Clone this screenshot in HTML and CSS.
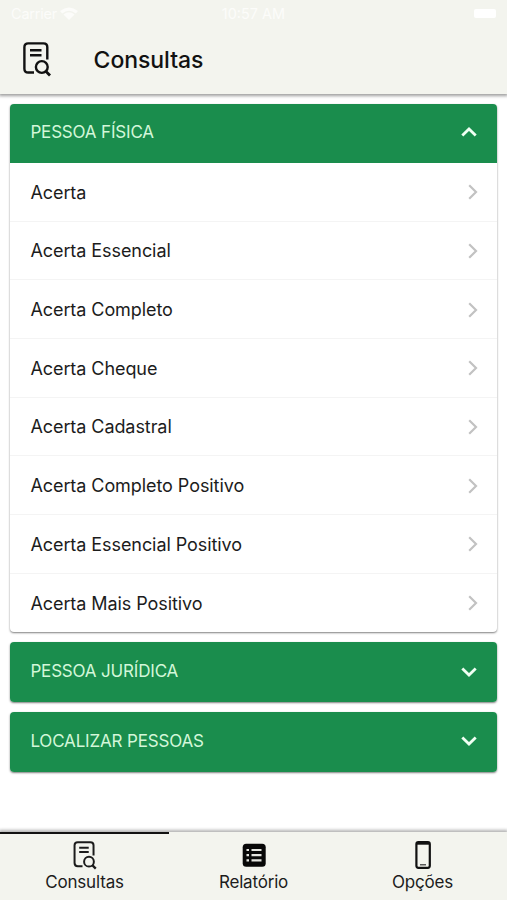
FILE: index.html
```html
<!DOCTYPE html>
<html lang="pt-BR">
<head>
<meta charset="utf-8">
<title>Consultas</title>
<link rel="stylesheet" href="styles.css">
</head>
<body>
<svg class="defs" width="0" height="0">
  <symbol id="search-doc" viewBox="0 0 28 35">
    <path d="M11 30.5H5.2Q1.4 30.5 1.4 26.7V5.2Q1.4 1.4 5.2 1.4H20.5Q24.3 1.4 24.3 5.2V17.5M7 8.2H18.5M7 13.3H18.5" fill="none" stroke="currentColor" stroke-width="2.4"/>
    <circle cx="18.8" cy="25" r="5.9" fill="none" stroke="currentColor" stroke-width="2.4"/>
    <path d="M22.8 29.2L27 33.4" fill="none" stroke="currentColor" stroke-width="2.8"/>
  </symbol>
  <symbol id="chevron" viewBox="0 0 16 10">
    <path d="M1.3 1.4L8 8L14.7 1.4" fill="none" stroke="currentColor" stroke-width="2.8"/>
  </symbol>
  <symbol id="arrow" viewBox="0 0 10 16">
    <path d="M1.2 1.2L8 8L1.2 14.8" fill="none" stroke="currentColor" stroke-width="2.2"/>
  </symbol>
</svg>
<div class="app">
  <header class="top">
    <div class="status">
      <span class="carrier">Carrier
        <svg width="18" height="13" viewBox="0 0 18 13"><path d="M0 4Q9-3 18 4L15.8 6.4Q9 1 2.2 6.4ZM3.4 7.4Q9 3 14.6 7.4L9 13Z" fill="currentColor"/></svg>
      </span>
      <span class="time">10:57 AM</span>
      <span class="battery"></span>
    </div>
    <div class="bar">
      <svg class="bar-icon"><use href="#search-doc"/></svg>
      <h1>Consultas</h1>
    </div>
  </header>
  <main>
    <section class="card">
      <div class="head"><span>PESSOA FÍSICA</span><svg class="chev up"><use href="#chevron"/></svg></div>
      <ul>
        <li><span>Acerta</span><svg><use href="#arrow"/></svg></li>
        <li><span>Acerta Essencial</span><svg><use href="#arrow"/></svg></li>
        <li><span>Acerta Completo</span><svg><use href="#arrow"/></svg></li>
        <li><span>Acerta Cheque</span><svg><use href="#arrow"/></svg></li>
        <li><span>Acerta Cadastral</span><svg><use href="#arrow"/></svg></li>
        <li><span>Acerta Completo Positivo</span><svg><use href="#arrow"/></svg></li>
        <li><span>Acerta Essencial Positivo</span><svg><use href="#arrow"/></svg></li>
        <li><span>Acerta Mais Positivo</span><svg><use href="#arrow"/></svg></li>
      </ul>
    </section>
    <section class="card"><div class="head"><span>PESSOA JURÍDICA</span><svg class="chev"><use href="#chevron"/></svg></div></section>
    <section class="card"><div class="head"><span>LOCALIZAR PESSOAS</span><svg class="chev"><use href="#chevron"/></svg></div></section>
  </main>
  <nav class="tabs">
    <a class="tab active"><svg class="tab-doc"><use href="#search-doc"/></svg><span>Consultas</span></a>
    <a class="tab"><svg width="24" height="28" viewBox="0 0 24 28">
      <rect x="0.7" y="2.7" width="23" height="23" rx="3.5" fill="#080808"/>
      <path d="M4.5 9H7M4.5 14.2H7M4.5 19.4H7M9.5 9H19.5M9.5 14.2H19.5M9.5 19.4H19.5" stroke="#e4e5e0" stroke-width="2.2"/>
    </svg><span>Relatório</span></a>
    <a class="tab"><svg width="16" height="28" viewBox="0 0 16 28">
      <rect x="1.4" y="1.2" width="13.4" height="25.6" rx="2" fill="none" stroke="#111" stroke-width="2.2"/>
      <path d="M2 2.3H14" stroke="#111" stroke-width="2.8"/><path d="M5 23.8H11" stroke="#333" stroke-width="1.2"/>
    </svg><span>Opções</span></a>
  </nav>
</div>
</body>
</html>
```

FILE: styles.css
```css
* { box-sizing: border-box; }
body { margin: 0; background: #fff; font-family: Inter, "Liberation Sans", sans-serif; color: #1c1c1c; }
.defs { position: absolute; }
.app { display: flex; flex-direction: column; height: 900px; overflow: hidden; }
.top { height: 94px; flex: none; background: #f3f4ee; box-shadow: 0 1px 3px 1px rgba(0,0,0,.38); }
.status { display: grid; grid-template-columns: 1fr auto 1fr; align-items: center; height: 26px; padding: 0 11px; font-size: 14.5px; color: #fcfcfa; }
.carrier { display: flex; align-items: center; gap: 3px; letter-spacing: -.2px; }
.battery { width: 22px; height: 9px; border-radius: 2px; background: #fff; justify-self: end; }
.bar { display: flex; align-items: center; height: 66px; padding-left: 23px; color: #111; }
.bar-icon { width: 28px; height: 35px; }
h1 { margin: 2px 0 0 42.6px; font-size: 23px; font-weight: 500; line-height: 30px; letter-spacing: -.06px; }
main { flex: 1; padding: 9.6px 9.6px 0 10.4px; display: flex; flex-direction: column; gap: 10px; }
.card { flex: none; border-radius: 4px; background: #fff; box-shadow: 0 1px 2px rgba(0,0,0,.5); }
.head { display: flex; align-items: center; justify-content: space-between; height: 59.8px; padding: 0 20px; background: #1a8d4d; color: #d3f7d9; font-size: 17px; letter-spacing: -.17px; border-radius: 4px; }
.head:not(:last-child) { height: 59.4px; border-radius: 4px 4px 0 0; }
.head span { margin-top: -2px; }
.chev { width: 16px; height: 10px; color: #f0fff3; margin-top: -1px; }
.up { transform: rotate(180deg); margin-top: -3px; }
ul { list-style: none; margin: 0; padding: 0; }
li { display: flex; align-items: center; justify-content: space-between; height: 58.67px; padding: 0 19.5px 0 20px; font-size: 18px; letter-spacing: -.07px; border-bottom: 1px solid #f4f4f4; }
li:last-child { border-bottom: 0; }
li span { margin-top: 1px; }
li svg { width: 10px; height: 16px; color: #c2c2c2; margin-top: 1px; }
.tabs { display: flex; flex: none; height: 68px; background: #f3f4ee; box-shadow: 0 -1px 3px 1px rgba(0,0,0,.3); }
.tab { flex: 1; display: flex; flex-direction: column; align-items: center; padding-top: 8px; border-top: 2px solid transparent; font-size: 17px; line-height: 24px; letter-spacing: -.18px; gap: 1px; }
.tab svg { flex: none; margin-top: -1px; }
.tab.active { border-color: #111; }
.tab-doc { width: 24px; height: 29px; color: #1b1b1b; margin-bottom: -1px; }
```
